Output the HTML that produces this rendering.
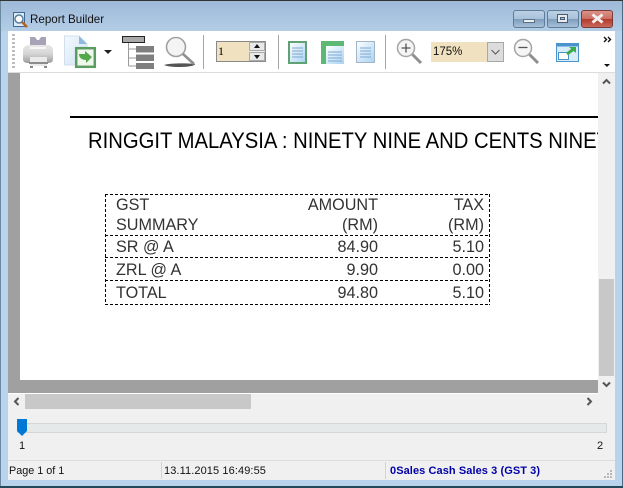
<!DOCTYPE html>
<html><head><meta charset="utf-8">
<style>
html,body{margin:0;padding:0;width:623px;height:488px;overflow:hidden;background:#b9d1ea}
*{box-sizing:border-box}
.a{position:absolute}
.t{position:absolute;white-space:nowrap;font-family:"Liberation Sans",sans-serif;color:#000}
.r{position:absolute;white-space:nowrap;font-family:"Liberation Sans",sans-serif;font-size:16.200px;line-height:20px;color:#333;font-weight:normal}
.ra{text-align:right}
.dh{position:absolute;height:1px;background:repeating-linear-gradient(90deg,#000 0 3px,transparent 3px 5px)}
.dv{position:absolute;width:1px;background:repeating-linear-gradient(#000 0 3px,transparent 3px 5px)}
</style></head><body>
<div class="a" style="left:0;top:0;width:623px;height:488px;background:#bad3ec;overflow:hidden">
<div class="a" style="left:0;top:0;width:623px;height:31px;background:linear-gradient(#9db9d8,#b3cde6)"></div>
<div class="a" style="left:0;top:0;width:623px;height:1px;background:#333"></div>
<div class="a" style="left:0;top:1px;width:1px;height:487px;background:#6a8aa0"></div>
<div class="a" style="right:0;top:1px;width:1px;height:487px;background:#4a6a80"></div>
<div class="a" style="left:0;top:486px;width:623px;height:2px;background:#23495a"></div>

<svg class="a" style="left:12px;top:11px" width="17" height="18" viewBox="0 0 17 18"><path d="M1.500 1.500H12.500V15.500H1.500Z" fill="#dcebf7" stroke="#3d6a96"/><circle cx="7" cy="8" r="4" fill="#fff" stroke="#5a7f9f" stroke-width="1.500"/><path d="M10 11L15 16" stroke="#b5651d" stroke-width="2.500"/></svg>
<div class="t" style="left:30px;top:12px;font-size:11.600px;line-height:15px;color:#111">Report Builder</div>

<div class="a" style="left:513px;top:10px;width:32px;height:18px;border:1px solid #5e7c9a;border-radius:3px;background:linear-gradient(#bcd0e4 0,#a9c2db 48%,#7f9dbc 52%,#a7c0d8 100%)"></div>
<div class="a" style="left:523px;top:19px;width:12px;height:4px;background:#e9eef3;border:1px solid #5d6f83"></div>
<div class="a" style="left:547px;top:10px;width:32px;height:18px;border:1px solid #5e7c9a;border-radius:3px;background:linear-gradient(#bcd0e4 0,#a9c2db 48%,#7f9dbc 52%,#a7c0d8 100%)"></div>
<div class="a" style="left:557px;top:14px;width:11px;height:9px;background:#e4eaf0;border:1px solid #4b5c6e"></div>
<div class="a" style="left:560px;top:17px;width:5px;height:3px;background:#a9c2db;border:1px solid #4b5c6e"></div>
<div class="a" style="left:581px;top:10px;width:32px;height:18px;border:1px solid #7d3a35;border-radius:3px;background:linear-gradient(#d9938a 0,#cc6f63 48%,#b13a2c 52%,#c9695c 100%)"></div>
<svg class="a" style="left:590px;top:13px" width="15" height="11" viewBox="0 0 15 11"><path d="M2.500 1.500L12.500 9.500M12.500 1.500L2.500 9.500" stroke="#f2eeee" stroke-width="3"/></svg>

<div class="a" style="left:8px;top:31px;width:607px;height:41px;background:#fff"></div>
<div class="a" style="left:8px;top:72px;width:607px;height:1px;background:#dcdcdc"></div>
<div class="a" style="left:12px;top:34px;width:3px;height:36px;background:repeating-linear-gradient(#bdbdbd 0 2px,#fff 2px 4px)"></div>

<svg class="a" style="left:20px;top:34px" width="36" height="36" viewBox="0 0 36 36">
<defs><linearGradient id="b" x1="0" y1="0" x2="0" y2="1"><stop offset="0" stop-color="#e8e8e8"/><stop offset=".5" stop-color="#d4d4d4"/><stop offset="1" stop-color="#9d9d9d"/></linearGradient></defs>
<path d="M10 3H15L17 6H19L21 3H26V14H10Z" fill="#a7a2b5"/>
<path d="M3 16C3 13 6 11 9 11H27C31 11 33 13 33 17V25C33 28 31 29 28 29H8C5 29 3 28 3 25Z" fill="url(#b)"/>
<path d="M10 13H26V15H10Z" fill="#f7f7f7"/>
<path d="M10 23H27V32H10Z" fill="#eaeaea"/>
<path d="M9 28H28V30H9Z" fill="#8c8c8c"/>
<path d="M10 32H13V34H10ZM24 32H27V34H24Z" fill="#888"/>
</svg>

<svg class="a" style="left:64px;top:35px" width="34" height="34" viewBox="0 0 34 34">
<defs><linearGradient id="e" x1="0" y1="0" x2="1" y2="1"><stop offset="0" stop-color="#f4f9fd"/><stop offset="1" stop-color="#cfe3f5"/></linearGradient></defs>
<path d="M.5 1H15L23 9V30H.5Z" fill="url(#e)" stroke="#d3e0ec"/>
<path d="M15 1L23 9H15Z" fill="#8fb9de"/>
<rect x="12.200" y="13.200" width="18.600" height="18.600" fill="#f0f7ec" stroke="#5a9c62" stroke-width="2.500"/>
<path d="M15 19L21 19L21 16L28 22L22 28L22 25C18 25 15 23 15 19Z" fill="#55a84a"/>
</svg>
<div class="a" style="left:104px;top:50px;width:0;height:0;border-left:4px solid transparent;border-right:4px solid transparent;border-top:4px solid #222"></div>

<svg class="a" style="left:121px;top:35px" width="34" height="34" viewBox="0 0 34 34">
<rect x="1.500" y="1.500" width="22" height="6" fill="#a9a9a9" stroke="#222"/>
<path d="M7.500 8V31M7.500 14H15M7.500 23H15M7.500 31H15" stroke="#9a9a9a" fill="none"/>
<rect x="15" y="11" width="18" height="6.500" fill="#7f7f7f"/>
<rect x="15" y="19.500" width="18" height="6.500" fill="#7f7f7f"/>
<rect x="15" y="28" width="18" height="6" fill="#7f7f7f"/>
</svg>

<svg class="a" style="left:163px;top:36px" width="34" height="32" viewBox="0 0 34 32">
<path d="M1 29C6 27 24 27 32 28C32 30 24 31 16 31C8 31 3 30 1 29Z" fill="#555"/>
<circle cx="13" cy="11" r="9.500" fill="#f4f4f4" stroke="#a0a0a0" stroke-width="1.600"/>
<path d="M20 18L31 28" stroke="#8f8f8f" stroke-width="2.600"/>
</svg>

<div class="a" style="left:203px;top:35px;width:1px;height:34px;background:#a6a6a6"></div>
<div class="a" style="left:278px;top:35px;width:1px;height:34px;background:#a6a6a6"></div>
<div class="a" style="left:385px;top:35px;width:1px;height:34px;background:#a6a6a6"></div>

<div class="a" style="left:216px;top:41px;width:50px;height:21px;background:#eee;border:1px solid #8a8a8a"></div>
<div class="a" style="left:217px;top:42px;width:32px;height:19px;background:#f0e2c0"></div>
<div class="t" style="left:218px;top:44px;font-size:12px;line-height:15px;font-family:'Liberation Serif',serif">1</div>
<div class="a" style="left:249px;top:42px;width:16px;height:9px;background:#e8e8e8;border:1px solid #aaa"></div>
<div class="a" style="left:249px;top:52px;width:16px;height:9px;background:#e8e8e8;border:1px solid #aaa"></div>
<div class="a" style="left:254px;top:44px;width:0;height:0;border-left:3px solid transparent;border-right:3px solid transparent;border-bottom:4px solid #111"></div>
<div class="a" style="left:254px;top:55px;width:0;height:0;border-left:3px solid transparent;border-right:3px solid transparent;border-top:4px solid #111"></div>

<svg class="a" style="left:288px;top:41px" width="19" height="23" viewBox="0 0 19 23">
<defs><linearGradient id="p" x1="0" y1="0" x2="1" y2="1"><stop offset="0" stop-color="#fff"/><stop offset="1" stop-color="#a9d2f2"/></linearGradient></defs>
<rect x="1" y="1" width="17" height="21" fill="url(#p)" stroke="#5fa274" stroke-width="2"/>
<path d="M4 7H15M4 10H15M4 13H15M4 16H15" stroke="#7ea8d0"/></svg>
<svg class="a" style="left:321px;top:41px" width="24" height="23" viewBox="0 0 24 23">
<rect width="23" height="23" fill="#5db874"/>
<rect x="5" y="5" width="18" height="18" fill="url(#p)"/>
<path d="M7 11H21M7 14H21M7 17H21M7 20H21" stroke="#7ea8d0"/></svg>
<svg class="a" style="left:356px;top:41px" width="19" height="23" viewBox="0 0 19 23">
<rect x=".5" y=".5" width="18" height="21" fill="url(#p)" stroke="#a3b6c8"/>
<path d="M4 7H15M4 10H15M4 13H15M4 16H15" stroke="#7ea8d0"/></svg>

<svg class="a" style="left:395px;top:38px" width="28" height="28" viewBox="0 0 28 28">
<circle cx="11" cy="10" r="8.500" fill="#f5f5f5" stroke="#a5a5a5" stroke-width="1.500"/>
<path d="M6.500 10H15.500M11 5.500V14.500" stroke="#555" stroke-width="1.300"/>
<path d="M17.500 16.500L26 25" stroke="#8f8f8f" stroke-width="3"/></svg>

<div class="a" style="left:431px;top:42px;width:56px;height:20px;background:#f0e2c0"></div>
<div class="t" style="left:433px;top:45px;font-size:11.500px;line-height:15px;color:#111">175%</div>
<div class="a" style="left:487px;top:42px;width:17px;height:20px;background:#dcdcdc;border:1px solid #a8a8a8"></div>
<svg class="a" style="left:491px;top:49px" width="9" height="6" viewBox="0 0 9 6"><path d="M.5 1L4.500 5L8.500 1" fill="none" stroke="#555"/></svg>

<svg class="a" style="left:512px;top:38px" width="28" height="27" viewBox="0 0 28 27">
<circle cx="11" cy="10" r="8.500" fill="#f5f5f5" stroke="#a5a5a5" stroke-width="1.500"/>
<path d="M6.500 9.500H15.500" stroke="#555" stroke-width="1.300"/>
<path d="M17.500 16.500L26 25" stroke="#8f8f8f" stroke-width="3"/></svg>

<svg class="a" style="left:556px;top:43px" width="24" height="20" viewBox="0 0 24 20">
<rect x=".5" y=".5" width="22" height="18" fill="#d8ecfa" stroke="#4a93cc"/>
<rect x="0" y="0" width="23" height="3.500" fill="#4a93cc"/>
<rect x="2.500" y="9.500" width="10" height="7" fill="#fff" stroke="#4a93cc"/>
<path d="M11 11L17 6.500" stroke="#3cab4c" stroke-width="3"/><path d="M13 4H20V10Z" fill="#3cab4c"/></svg>

<svg class="a" style="left:603px;top:36px" width="9" height="7" viewBox="0 0 9 7"><path d="M1 1L3.500 3.500L1 6M5 1L7.500 3.500L5 6" fill="none" stroke="#111" stroke-width="1.400"/></svg>
<div class="a" style="left:604px;top:64px;width:0;height:0;border-left:3px solid transparent;border-right:3px solid transparent;border-top:3px solid #111"></div>

<div class="a" style="left:8px;top:73px;width:590px;height:320px;background:#a0a0a0"></div>
<div class="a" style="left:20px;top:73px;width:578px;height:307px;background:#fff;overflow:hidden">
  <div class="a" style="left:50px;top:43px;width:528px;height:2px;background:#000"></div>
  <div class="t" style="left:68px;top:54px;font-size:22.500px;line-height:28px;color:#000;transform:scaleX(.9);transform-origin:0 0">RINGGIT MALAYSIA : NINETY NINE AND CENTS NINETY NINE ONLY</div>

  <div class="dh" style="left:85px;top:121px;width:385px"></div>
  <div class="dh" style="left:85px;top:162px;width:385px"></div>
  <div class="dh" style="left:85px;top:184px;width:385px"></div>
  <div class="dh" style="left:85px;top:207px;width:385px"></div>
  <div class="dh" style="left:85px;top:231px;width:385px"></div>
  <div class="dv" style="left:85px;top:121px;height:111px"></div>
  <div class="dv" style="left:469px;top:121px;height:111px"></div>

  <div class="r" style="left:96px;top:122px">GST</div>
  <div class="r" style="left:96px;top:142px">SUMMARY</div>
  <div class="r" style="left:96px;top:164px">SR @ A</div>
  <div class="r" style="left:96px;top:187px">ZRL @ A</div>
  <div class="r" style="left:96px;top:210px">TOTAL</div>

  <div class="r ra" style="left:258px;width:100px;top:122px">AMOUNT</div>
  <div class="r ra" style="left:258px;width:100px;top:142px">(RM)</div>
  <div class="r ra" style="left:258px;width:100px;top:164px">84.90</div>
  <div class="r ra" style="left:258px;width:100px;top:187px">9.90</div>
  <div class="r ra" style="left:258px;width:100px;top:210px">94.80</div>

  <div class="r ra" style="left:384px;width:80px;top:122px">TAX</div>
  <div class="r ra" style="left:384px;width:80px;top:142px">(RM)</div>
  <div class="r ra" style="left:384px;width:80px;top:164px">5.10</div>
  <div class="r ra" style="left:384px;width:80px;top:187px">0.00</div>
  <div class="r ra" style="left:384px;width:80px;top:210px">5.10</div>
</div>

<div class="a" style="left:598px;top:73px;width:17px;height:320px;background:#f0f0f0"></div>
<div class="a" style="left:599px;top:279px;width:15px;height:97px;background:#c8c8c8"></div>
<svg class="a" style="left:602px;top:78px" width="9" height="7" viewBox="0 0 9 7"><path d="M1 5.500L4.500 2L8 5.500" fill="none" stroke="#555" stroke-width="2"/></svg>
<svg class="a" style="left:602px;top:381px" width="9" height="7" viewBox="0 0 9 7"><path d="M1 1.500L4.500 5L8 1.500" fill="none" stroke="#555" stroke-width="2"/></svg>

<div class="a" style="left:8px;top:393px;width:590px;height:1px;background:#fff"></div>
<div class="a" style="left:8px;top:394px;width:607px;height:86px;background:#f0f0f0"></div>
<div class="a" style="left:598px;top:393px;width:17px;height:1px;background:#f0f0f0"></div>
<div class="a" style="left:25px;top:394px;width:226px;height:15px;background:#c8c8c8"></div>
<svg class="a" style="left:13px;top:397px" width="7" height="9" viewBox="0 0 7 9"><path d="M5.500 1L2 4.500L5.500 8" fill="none" stroke="#555" stroke-width="2"/></svg>
<svg class="a" style="left:586px;top:397px" width="7" height="9" viewBox="0 0 7 9"><path d="M1.500 1L5 4.500L1.500 8" fill="none" stroke="#555" stroke-width="2"/></svg>

<div class="a" style="left:17px;top:423px;width:590px;height:10px;background:#e6e9ea;border:1px solid #d6d6d6"></div>
<svg class="a" style="left:17px;top:419px" width="10" height="17" viewBox="0 0 10 17"><path d="M0 0H10V12L5 17L0 12Z" fill="#0078d7"/></svg>
<div class="t" style="left:19px;top:440px;font-size:11px;line-height:13px;color:#111">1</div>
<div class="t" style="left:597px;top:440px;font-size:11px;line-height:13px;color:#111">2</div>

<div class="a" style="left:8px;top:460px;width:607px;height:1px;background:#dcdcdc"></div>
<div class="a" style="left:161px;top:462px;width:1px;height:17px;background:#d4d4d4"></div>
<div class="a" style="left:385px;top:462px;width:1px;height:17px;background:#d4d4d4"></div>
<div class="t" style="left:9px;top:464px;font-size:10.800px;line-height:14px;color:#111">Page 1 of 1</div>
<div class="t" style="left:164px;top:464px;font-size:11px;line-height:14px;letter-spacing:.1px;color:#111">13.11.2015 16:49:55</div>
<div class="t" style="left:390px;top:464px;font-size:11px;line-height:14px;letter-spacing:.08px;font-weight:bold;color:#0000a8">0Sales Cash Sales 3 (GST 3)</div>
<div class="a" style="left:604px;top:470px;width:9px;height:9px;background:
linear-gradient(#b8b8b8,#b8b8b8) 6px 0/2px 2px no-repeat,
linear-gradient(#b8b8b8,#b8b8b8) 3px 3px/2px 2px no-repeat,
linear-gradient(#b8b8b8,#b8b8b8) 6px 3px/2px 2px no-repeat,
linear-gradient(#b8b8b8,#b8b8b8) 0 6px/2px 2px no-repeat,
linear-gradient(#b8b8b8,#b8b8b8) 3px 6px/2px 2px no-repeat,
linear-gradient(#b8b8b8,#b8b8b8) 6px 6px/2px 2px no-repeat"></div>
</div>
</body></html>
